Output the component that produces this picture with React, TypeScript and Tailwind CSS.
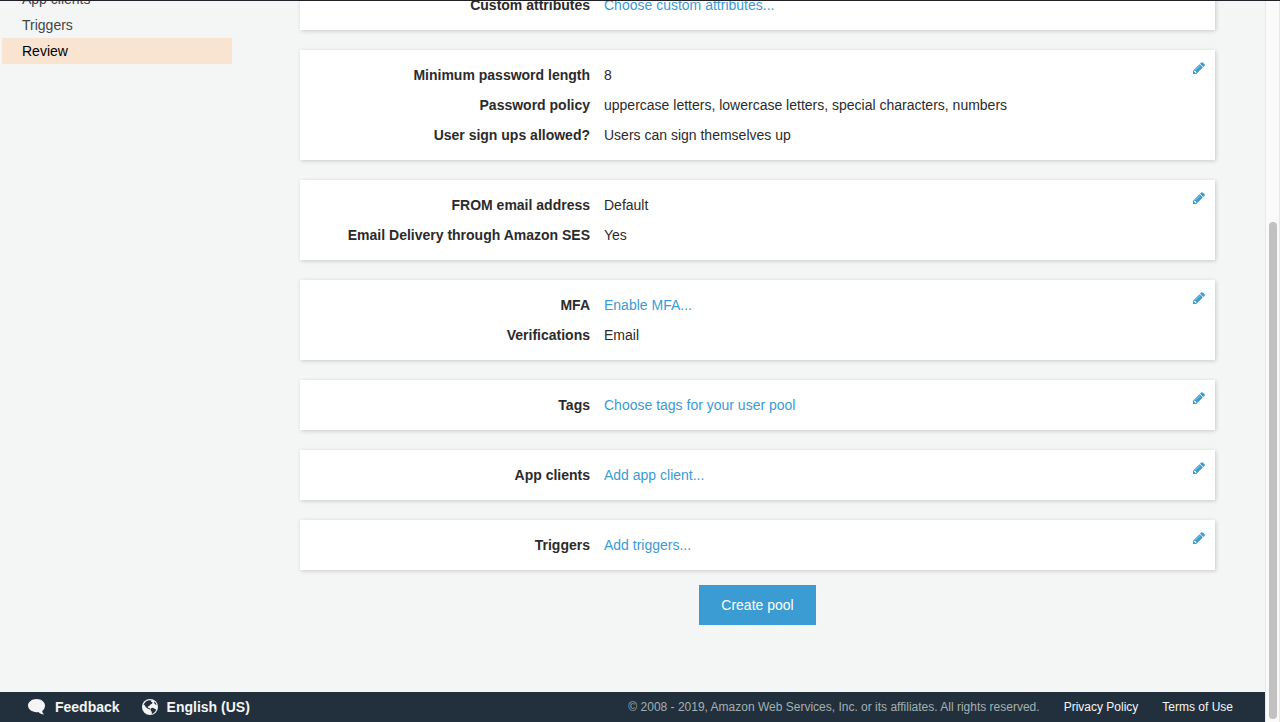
import React from "react";

type Row = { label: string; value: string; link?: boolean };

const sections: { name: string; rows: Row[]; editable: boolean }[] = [
  {
    name: "attributes",
    editable: false,
    rows: [{ label: "Custom attributes", value: "Choose custom attributes...", link: true }],
  },
  {
    name: "policies",
    editable: true,
    rows: [
      { label: "Minimum password length", value: "8" },
      { label: "Password policy", value: "uppercase letters, lowercase letters, special characters, numbers" },
      { label: "User sign ups allowed?", value: "Users can sign themselves up" },
    ],
  },
  {
    name: "email",
    editable: true,
    rows: [
      { label: "FROM email address", value: "Default" },
      { label: "Email Delivery through Amazon SES", value: "Yes" },
    ],
  },
  {
    name: "MFA and verifications",
    editable: true,
    rows: [
      { label: "MFA", value: "Enable MFA...", link: true },
      { label: "Verifications", value: "Email" },
    ],
  },
  { name: "tags", editable: true, rows: [{ label: "Tags", value: "Choose tags for your user pool", link: true }] },
  { name: "app clients", editable: true, rows: [{ label: "App clients", value: "Add app client...", link: true }] },
  { name: "triggers", editable: true, rows: [{ label: "Triggers", value: "Add triggers...", link: true }] },
];

const steps = ["App clients", "Triggers", "Review"];

function PencilIcon() {
  return (
    <svg viewBox="0 0 1792 1792" className="size-3.5" fill="currentColor" aria-hidden="true">
      <path d="M491 1536l91-91-235-235-91 91v107h128v128h107zm523-928q0-22-22-22-10 0-17 7l-542 542q-7 7-7 17 0 22 22 22 10 0 17-7l542-542q7-7 7-17zm-54-192l416 416-832 832h-416v-416zm683 96q0 53-37 90l-166 166-416-416 166-165q36-38 90-38 53 0 91 38l235 234q37 39 37 91z" />
    </svg>
  );
}

function BubbleIcon() {
  return (
    <svg viewBox="0 0 18 16" className="h-4 w-[18px]" fill="currentColor" aria-hidden="true">
      <path d="M8.6 0C13.3 0 17 2.9 17 6.6c0 2.4-1.2 4.3-2.800 5.500.1 1.500.9 2.700 1.900 3.400-2.300 0-4.400-.9-5.700-2.500-.5.1-1.100.2-1.800.2C3.900 13.200 0 10.300 0 6.600S3.900 0 8.600 0z" />
    </svg>
  );
}

function GlobeIcon() {
  return (
    <svg viewBox="0 0 16 16" className="size-4" aria-hidden="true">
      <circle cx="8" cy="8" r="8" fill="#f5f5f5" />
      <path
        fill="#22303d"
        d="M2.200 4.500L4.200 2.300 6.800 1.200l2.700.4-.5 1.300 1.500.2-.4 1.700-1.700.7-1.200 1.600-1.500.4.400 1.200 1.500.500.9 1.100-.7.300-2.200-1-1.900-1.500-1.300-2.300-.9.100zM8.900 9.300l2-.5 1.700 1 1.600.8-.9 1.900-1.900 1.700-1.500.7-.2-2.100-1.100-1.600zM12.300 2.500l1.500 1.400.9 2-1.300-.4-1.200-1.300z"
      />
    </svg>
  );
}

function Card({ name, rows, editable }: { name: string; rows: Row[]; editable: boolean }) {
  return (
    <section className="flex shrink-0 bg-white py-2.5 shadow-[1px_1px_4px_rgba(0,0,0,0.18)]">
      <dl className="min-w-0 grow">
        {rows.map((row) => (
          <div key={row.label} className="flex gap-3.5 leading-[30px]">
            <dt className="w-[290px] shrink-0 text-right font-bold">{row.label}</dt>
            <dd>
              {row.link ? (
                <a href="#" className="text-[#3b9bd3]">
                  {row.value}
                </a>
              ) : (
                row.value
              )}
            </dd>
          </div>
        ))}
      </dl>
      {editable && (
        <button type="button" aria-label={`Edit ${name}`} className="mr-[9px] mt-px self-start text-[#3b9bd3]">
          <PencilIcon />
        </button>
      )}
    </section>
  );
}

export default function App() {
  return (
    <div className="flex h-screen overflow-hidden border-t border-[#232028] bg-[#f4f6f6] font-['Liberation_Sans',Arial,sans-serif] text-sm text-[#2b2b2b]">
      <div className="flex min-w-0 grow flex-col">
        <div className="flex min-h-0 grow overflow-hidden">
          <nav aria-label="Steps" className="-mt-[15px] ml-0.5 w-[230px] shrink-0">
            {steps.map((step) => (
              <a
                key={step}
                href="#"
                aria-current={step === "Review" ? "step" : undefined}
                className={
                  step === "Review"
                    ? "block bg-[#f9e4d2] pl-5 leading-[26px] text-black"
                    : "block pl-5 leading-[26px] text-[#444444]"
                }
              >
                {step}
              </a>
            ))}
          </nav>
          <main className="ml-[68px] mr-[50px] flex min-w-0 grow flex-col justify-end pb-[67px]">
            <div className="flex flex-col gap-5">
              {sections.map((section) => (
                <Card key={section.name} {...section} />
              ))}
            </div>
            <button type="button" className="mt-[15px] h-10 shrink-0 self-center bg-[#3b9bd3] px-[22px] text-white">
              Create pool
            </button>
          </main>
        </div>
        <footer className="flex h-[30px] shrink-0 items-center bg-[#22303d] pl-7 pr-8 text-xs text-[#f5f5f5]">
          <button type="button" className="flex items-center gap-[9px] text-sm font-bold">
            <BubbleIcon />
            Feedback
          </button>
          <button type="button" className="ml-[22px] flex items-center gap-[9px] text-sm font-bold">
            <GlobeIcon />
            English (US)
          </button>
          <p className="ml-auto text-[#a3b0b0]">
            © 2008 - 2019, Amazon Web Services, Inc. or its affiliates. All rights reserved.
          </p>
          <a href="#" className="ml-6">
            Privacy Policy
          </a>
          <a href="#" className="ml-6">
            Terms of Use
          </a>
        </footer>
      </div>
      <div className="flex w-[15px] shrink-0 flex-col items-center border-x border-[#e8e8e8] bg-[#fafafa] pb-[3px] pt-[221px]">
        <div className="w-2 grow rounded-full bg-[#c1c1c1]" />
      </div>
    </div>
  );
}
